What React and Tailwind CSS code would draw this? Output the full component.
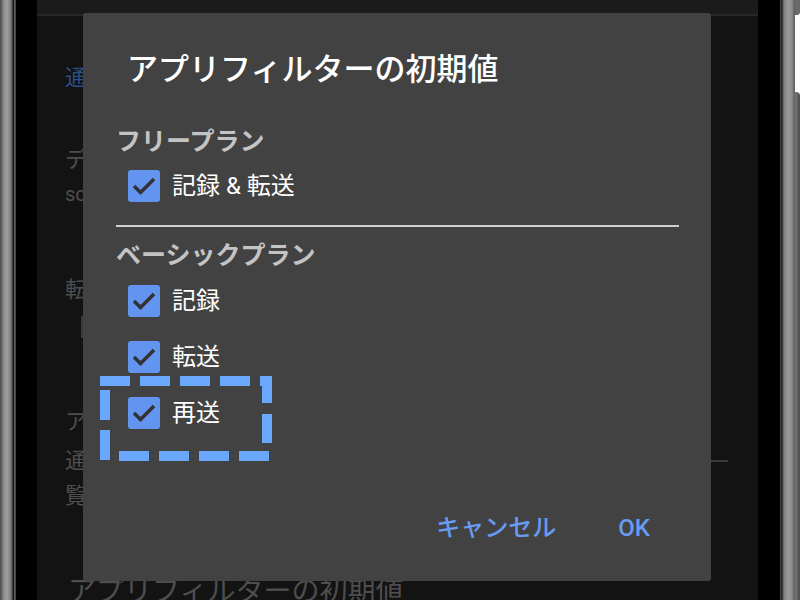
import React from "react";

const FONT = { fontFamily: "Roboto, 'Noto Sans CJK JP', 'Noto Sans', sans-serif" };

function CheckBox() {
  return (
    <div className="w-[32px] h-[32px] rounded-[3px] bg-[#6394f0] flex items-center justify-center shrink-0">
      <svg width="32" height="32" viewBox="0 0 32 32">
        <path d="M6 16 L12.5 22.5 L26 9" fill="none" stroke="#333333" strokeWidth="3.6" strokeLinecap="butt" strokeLinejoin="miter" />
      </svg>
    </div>
  );
}

function Row({ label }) {
  return (
    <div className="h-[56px] flex items-center pl-[45px] gap-[12px]">
      <CheckBox />
      <span className="text-[24px] leading-[32px] text-white">{label}</span>
    </div>
  );
}

function DashedBox() {
  const c = "#6aa8fe";
  const top = [100, 140, 180, 220];
  const bottom = [119, 159, 199, 239];
  return (
    <svg className="absolute left-0 top-0 pointer-events-none" width="800" height="600" viewBox="0 0 800 600">
      {top.map((x) => (
        <rect key={"t" + x} x={x} y={376} width={30} height={10} fill={c} />
      ))}
      <rect x={260} y={376} width={12} height={10} fill={c} />
      <rect x={262} y={376} width={10} height={27} fill={c} />
      <rect x={262} y={414} width={10} height={29} fill={c} />
      {bottom.map((x) => (
        <rect key={"b" + x} x={x} y={451} width={30} height={10} fill={c} />
      ))}
      <rect x={100} y={390} width={10} height={30} fill={c} />
      <rect x={100} y={430} width={10} height={30} fill={c} />
    </svg>
  );
}

export default function App() {
  return (
    <div className="w-[800px] h-[600px] bg-white relative overflow-hidden flex" style={FONT}>
      {/* left bezel */}
      <div className="w-[16px] h-full bg-[linear-gradient(to_right,#4a4a4a_0px,#8e8e8e_4px,#a0a0a0_7px,#7a7a7a_11px,#2a2a2a_13px,#1a1a1a_13.5px,#5c5c5c_14.5px,#3a3a3a_16px)]" />
      <div className="w-[21px] h-full bg-black" />

      {/* screen */}
      <div className="flex-1 h-full bg-[#131313] flex flex-col relative overflow-hidden">
        <div className="h-[16px] bg-[#1b1b1b] border-b-2 border-[#262626] shrink-0" />
        <div className="flex flex-col pl-[28px] text-[22px] leading-[32px] text-[#4e4e4e]">
          <div className="mt-[46px] text-[#2c4f88] whitespace-nowrap">通知設定</div>
          <div className="mt-[50px] whitespace-nowrap">データ送信先</div>
          <div className="mt-[5px] text-[20px] leading-[26px] whitespace-nowrap">scheme</div>
          <div className="mt-[67px] whitespace-nowrap">転送設定</div>
          <div className="mt-[10px] ml-[16px] w-[2px] h-[22px] bg-[#3a3a3a]" />
          <div className="mt-[68px] whitespace-nowrap">アプリ通知</div>
          <div className="mt-[7px] flex items-center pr-[30px]">
            <span className="whitespace-nowrap">通知の一</span>
            <div className="flex-1 h-[2px] bg-[#3c3c3c] ml-[4px]" />
          </div>
          <div className="mt-[3px] whitespace-nowrap">覧</div>
          <div className="mt-[62px] ml-[3px] text-[28px] leading-[36px] whitespace-nowrap">アプリフィルターの初期値</div>
        </div>

        {/* dialog */}
        <div className="absolute left-[46px] top-[13px] w-[628px] h-[568px] bg-[#424242] rounded-[3px] flex flex-col">
          <div className="pt-[37px] pl-[44px] text-[31px] leading-[40px] font-medium text-white whitespace-nowrap">
            アプリフィルターの初期値
          </div>
          <div className="mt-[36px] pl-[33px] text-[25px] leading-[32px] font-semibold text-[#c4c4c4]">フリープラン</div>
          <Row label="記録 & 転送" />
          <div className="mt-[11px] ml-[33px] mr-[32px] h-[2px] bg-[#cfcfcf]" />
          <div className="mt-[13px] pl-[33px] text-[25px] leading-[32px] font-semibold text-[#c4c4c4]">ベーシックプラン</div>
          <div className="mt-[1px] flex flex-col">
            <Row label="記録" />
            <Row label="転送" />
            <Row label="再送" />
          </div>
          <div className="mt-[69px] flex justify-end gap-[62px] pr-[61px] text-[24px] leading-[36px] font-medium text-[#689bf3]">
            <span>キャンセル</span>
            <span>OK</span>
          </div>
        </div>
      </div>

      {/* right side */}
      <div className="w-[22px] h-full bg-black" />
      <div className="w-[15px] h-full bg-[linear-gradient(to_right,#6a6a6a_0px,#1e1e1e_1px,#2a2a2a_2px,#7e7e7e_4px,#9a9a9a_8px,#8a8a8a_12px,#5a5a5a_15px)]" />
      <div className="w-[5px] h-full flex flex-col">
        <div className="h-[15px] bg-[#6a6a6a] rounded-br-[3px]" />
        <div className="h-[77px] bg-white" />
        <div className="flex-1 bg-[linear-gradient(to_right,#7a7a7a,#4a4a4a)] rounded-tr-[4px]" />
      </div>

      <DashedBox />
    </div>
  );
}
